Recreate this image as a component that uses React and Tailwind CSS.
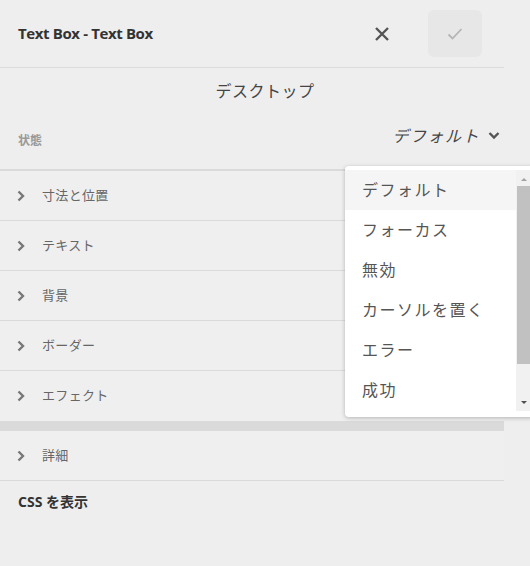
import React from 'react';

const font = { fontFamily: '"Open Sans", "Noto Sans CJK JP", sans-serif' };

const Chevron = () => (
    <svg width="8" height="12" viewBox="0 0 8 12" className="shrink-0">
        <path d="M1.5 1.5 L6 6 L1.5 10.5" fill="none" stroke="#777" strokeWidth="2.4" />
    </svg>
);

const Row = ({ label, last }) => (
    <div className={`flex items-center h-[50px] w-[504px] bg-[#efefef] pl-[17px] gap-[17px] ${last ? '' : 'border-b border-[#dadada]'}`}>
        <Chevron />
        <span className="text-[13px] text-[#666] tracking-wide">{label}</span>
    </div>
);

const options = ['デフォルト', 'フォーカス', '無効', 'カーソルを置く', 'エラー', '成功'];

export default function App() {
    return (
        <div className="relative w-[530px] h-[566px] bg-[#eeeeee] overflow-hidden" style={font}>
            {/* header */}
            <div className="flex items-center h-[68px] w-[504px] border-b border-[#dcdcdc] pl-[18px]">
                <h1 className="text-[15px] font-bold text-[#333] tracking-tight">Text Box - Text Box</h1>
                <button className="ml-auto mr-[38px] w-[16px] h-[16px] flex items-center justify-center">
                    <svg width="16" height="16" viewBox="0 0 16 16">
                        <path d="M2 2 L14 14 M14 2 L2 14" stroke="#555" strokeWidth="2.4" />
                    </svg>
                </button>
                <button className="mr-[22px] w-[54px] h-[47px] rounded-md bg-[#e7e7e7] flex items-center justify-center">
                    <svg width="16" height="14" viewBox="0 0 16 14">
                        <path d="M1.5 7.5 L5.5 11.5 L14.5 2" fill="none" stroke="#b5b5b5" strokeWidth="1.8" />
                    </svg>
                </button>
            </div>

            <div className="h-[46px] flex items-center justify-center text-[16px] text-[#444] tracking-[0.5px]">デスクトップ</div>

            {/* state */}
            <div className="h-[55px] w-[504px] flex items-center pl-[18px] pr-[4px]">
                <span className="text-[12px] font-bold text-[#999] mt-[-2px]">状態</span>
                <div className="ml-auto flex items-center gap-[8px] mt-[-12px]">
                    <span className="text-[16px] italic text-[#444] tracking-[1.5px]">デフォルト</span>
                    <svg width="12" height="9" viewBox="0 0 12 9">
                        <path d="M1.5 2 L6 6.5 L10.5 2" fill="none" stroke="#555" strokeWidth="2.4" />
                    </svg>
                </div>
            </div>

            {/* accordion */}
            <div className="border-t-2 border-[#dadada] w-[504px]">
                <Row label="寸法と位置" />
                <Row label="テキスト" />
                <Row label="背景" />
                <Row label="ボーダー" />
                <Row label="エフェクト" last />
                <div className="h-[10px] bg-[#dadada]" />
                <Row label="詳細" />
            </div>
            <div className="pl-[18px] pt-[10px] text-[14px] font-bold text-[#333]">CSS を表示</div>

            {/* dropdown menu */}
            <div className="absolute left-[345px] top-[166px] w-[190px] h-[251px] bg-white rounded-[4px] shadow-[0_1px_4px_rgba(0,0,0,0.25)] pt-[4px] flex">
                <div className="flex-1">
                    {options.map((o, i) => (
                        <div
                            key={o}
                            className={`h-[40px] flex items-center pl-[17px] text-[16px] tracking-[1.5px] text-[#555] ${i === 0 ? 'bg-[#f5f5f5]' : ''}`}
                        >
                            {o}
                        </div>
                    ))}
                </div>
                <div className="w-[15px] mr-[4px] mb-[6px] bg-[#f1f1f1] flex flex-col items-center">
                    <svg width="8" height="16" viewBox="0 0 8 16">
                        <path d="M1 11 L4 8 L7 11 Z" fill="#a3a3a3" />
                    </svg>
                    <div className="w-[13px] h-[178px] bg-[#c1c1c1]" />
                    <div className="flex-1" />
                    <svg width="8" height="16" viewBox="0 0 8 16">
                        <path d="M1 6 L4 9 L7 6 Z" fill="#505050" />
                    </svg>
                </div>
            </div>
        </div>
    );
}
